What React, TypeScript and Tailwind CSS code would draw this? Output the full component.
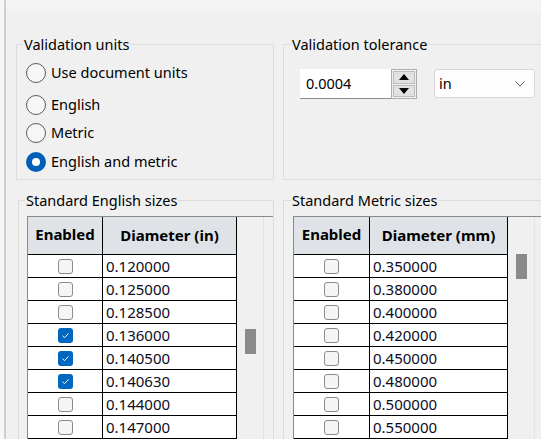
import React from "react";

const englishRows: [string, boolean][] = [
  ["0.120000", false],
  ["0.125000", false],
  ["0.128500", false],
  ["0.136000", true],
  ["0.140500", true],
  ["0.140630", true],
  ["0.144000", false],
  ["0.147000", false],
];

const metricRows: [string, boolean][] = [
  ["0.350000", false],
  ["0.380000", false],
  ["0.400000", false],
  ["0.420000", false],
  ["0.450000", false],
  ["0.480000", false],
  ["0.500000", false],
  ["0.550000", false],
];

function Radio({ label, checked, className }: { label: string; checked?: boolean; className?: string }) {
  return (
    <div className={`flex items-center h-[20px] ${className ?? ""}`}>
      {checked ? (
        <span className="w-[20px] h-[20px] rounded-full bg-[#005fb8] flex items-center justify-center">
          <span className="w-[8px] h-[8px] rounded-full bg-white" />
        </span>
      ) : (
        <span className="w-[20px] h-[20px] rounded-full border border-[#5c5c5c] bg-[#f6f6f6]" />
      )}
      <span className="ml-[5px]">{label}</span>
    </div>
  );
}

function CheckBox({ checked }: { checked: boolean }) {
  if (checked) {
    return (
      <span className="w-[15px] h-[15px] rounded-[3px] bg-[#0067c0] flex items-center justify-center">
        <svg width="9" height="7" viewBox="0 0 9 7">
          <polyline points="1.5,3.8 3.6,5.6 7.5,1.4" fill="none" stroke="white" strokeWidth="1" />
        </svg>
      </span>
    );
  }
  return <span className="w-[15px] h-[15px] rounded-[3px] border border-[#8b8b8b] bg-[#f5f5f5]" />;
}

function SizeTable({
  unit,
  rows,
  col1,
  col2,
  thumbTop,
}: {
  unit: string;
  rows: [string, boolean][];
  col1: string;
  col2: string;
  thumbTop: string;
}) {
  return (
    <div className="flex border-t border-l border-[#8a8a8a] text-[15px]">
      <div className="flex flex-col">
        <div className="flex h-[38px] bg-[#dfe3e8] font-bold">
          <div className={`${col1} border-r border-b border-black flex items-center justify-center pb-[2px]`}>Enabled</div>
          <div className={`${col2} border-r border-b border-black flex items-center justify-center`}>Diameter ({unit})</div>
        </div>
        {rows.map(([value, checked]) => (
          <div key={value} className="flex h-[23px] bg-white">
            <div className={`${col1} border-r border-b border-black flex items-center justify-center`}>
              <CheckBox checked={checked} />
            </div>
            <div className={`${col2} border-r border-b border-black flex items-center pl-[3px] text-[#0c0c1e]`}>{value}</div>
          </div>
        ))}
      </div>
      <div className="w-[27px] bg-[#f0f0f0] border-r border-[#e4e4e4] pl-[8px]">
        <div className={`w-[11px] h-[25px] bg-[#8a8a8a] ${thumbTop}`} />
      </div>
    </div>
  );
}

export default function App() {
  return (
    <div className="w-[541px] h-[439px] overflow-hidden flex bg-[#f0f0f0] text-[14.5px] text-black font-['Noto_Sans',sans-serif]">
      <div className="w-[4px] shrink-0 bg-[#f6f6f6]" />
      <div className="w-[2px] shrink-0 bg-[#cfcfcf]" />
      <div className="flex-1 flex flex-col">
        <div className="h-[12px] shrink-0 bg-[#f3f3f3]" />
        <div className="flex shrink-0 mt-[22px] ml-[10px] gap-[9px]">
          <fieldset className="w-[258px] h-[146px] shrink-0 border border-[#dcdcdc]">
            <legend className="ml-[6px] px-px leading-[20px]">Validation units</legend>
            <div className="pl-[9px]">
              <Radio label="Use document units" className="mt-[9px]" />
              <Radio label="English" className="mt-[12px]" />
              <Radio label="Metric" className="mt-[8px]" />
              <Radio label="English and metric" checked className="mt-[9px]" />
            </div>
          </fieldset>
          <fieldset className="w-[259px] h-[146px] shrink-0 border border-[#dcdcdc]">
            <legend className="ml-[7px] px-px leading-[20px]">Validation tolerance</legend>
            <div className="flex items-start pl-[16px] mt-[15px]">
              <div className="w-[91px] h-[30px] bg-white border-b border-[#8c8c8c] flex items-center pl-[6px]">0.0004</div>
              <div className="w-[26px] h-[30px] border border-[#adadad] bg-[#f0f0f0] flex flex-col p-px gap-px">
                <div className="flex-1 bg-[#e1e1e1] border border-[#bdbdbd] flex items-center justify-center">
                  <svg width="10" height="6" viewBox="0 0 10 6">
                    <polygon points="0,6 10,6 5,0" fill="black" />
                  </svg>
                </div>
                <div className="flex-1 bg-[#e1e1e1] border border-[#bdbdbd] flex items-center justify-center">
                  <svg width="10" height="6" viewBox="0 0 10 6">
                    <polygon points="0,0 10,0 5,6" fill="black" />
                  </svg>
                </div>
              </div>
              <div className="ml-[17px] w-[101px] h-[29px] bg-[#fdfdfd] border border-[#d6d6d6] rounded-[3px] flex items-center justify-between pl-[4px] pr-[9px]">
                <span>in</span>
                <svg width="10" height="6" viewBox="0 0 10 6">
                  <polyline points="0.5,0.5 5,5 9.5,0.5" fill="none" stroke="#606060" strokeWidth="1" />
                </svg>
              </div>
            </div>
          </fieldset>
        </div>
        <div className="flex shrink-0 mt-[10px] ml-[12px] gap-[9px]">
          <fieldset className="w-[256px] h-[300px] shrink-0 border border-[#dcdcdc]">
            <legend className="ml-[6px] px-px leading-[20px]">Standard English sizes</legend>
            <div className="pl-[8px] mt-[6px]">
              <SizeTable unit="in" rows={englishRows} col1="w-[75px]" col2="w-[134px]" thumbTop="mt-[112px]" />
            </div>
          </fieldset>
          <fieldset className="w-[259px] h-[300px] shrink-0 border border-[#dcdcdc]">
            <legend className="ml-[7px] px-px leading-[20px]">Standard Metric sizes</legend>
            <div className="pl-[9px] mt-[6px]">
              <SizeTable unit="mm" rows={metricRows} col1="w-[76px]" col2="w-[138px]" thumbTop="mt-[37px]" />
            </div>
          </fieldset>
        </div>
      </div>
    </div>
  );
}
